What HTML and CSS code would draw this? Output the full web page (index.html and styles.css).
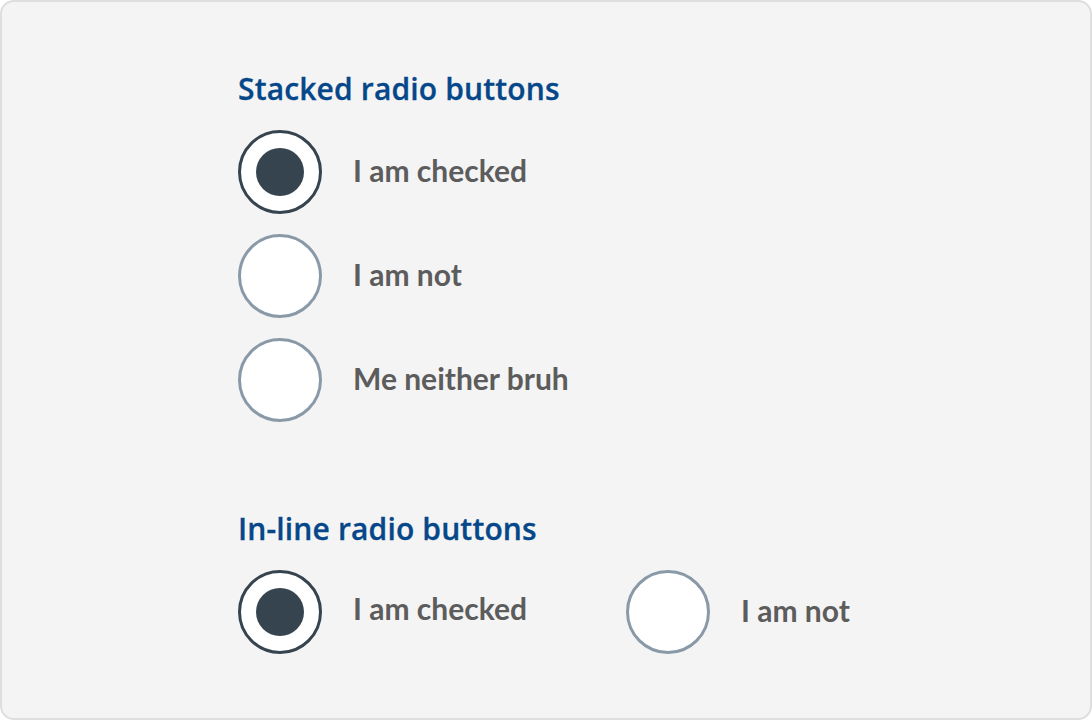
FILE: index.html
```html
<!DOCTYPE html>
<html lang="en">
<head>
<meta charset="utf-8">
<title>Radio buttons</title>
<link rel="stylesheet" href="styles.css">
</head>
<body>
<div class="card">
  <section class="group">
    <h2 class="group-title">Stacked radio buttons</h2>
    <div class="stack">
      <label class="option">
        <span class="radio radio--checked"><span class="radio-dot"></span></span>
        <span class="option-label">I am checked</span>
      </label>
      <label class="option">
        <span class="radio"></span>
        <span class="option-label">I am not</span>
      </label>
      <label class="option">
        <span class="radio"></span>
        <span class="option-label">Me neither bruh</span>
      </label>
    </div>
  </section>
  <section class="group group--inline">
    <h2 class="group-title">In-line radio buttons</h2>
    <div class="inline">
      <label class="option">
        <span class="radio radio--checked"><span class="radio-dot"></span></span>
        <span class="option-label option-label--raised">I am checked</span>
      </label>
      <label class="option">
        <span class="radio"></span>
        <span class="option-label">I am not</span>
      </label>
    </div>
  </section>
</div>
</body>
</html>
```
FILE: styles.css
```css
* { box-sizing: border-box; }
html, body { margin: 0; padding: 0; background: #ffffff; }
body { width: 1092px; height: 720px; font-family: "Open Sans", "Noto Sans", sans-serif; }

.card {
  width: 1092px;
  height: 720px;
  background: #f4f4f4;
  border: 2px solid #dedede;
  border-radius: 14px;
  padding: 72px 0 0 236px;
}

.group-title {
  margin: 0 0 26px 0;
  font-size: 30px;
  line-height: 30px;
  font-weight: 600;
  color: #06478a;
  letter-spacing: 0.15px;
  -webkit-text-stroke: 0.3px #06478a;
}

.group--inline { margin-top: 92px; }

.stack {
  display: flex;
  flex-direction: column;
  gap: 20px;
}

.inline {
  display: grid;
  grid-template-columns: 388px auto;
  justify-content: start;
}

.option {
  display: flex;
  align-items: center;
  gap: 31px;
}

.radio {
  width: 84px;
  height: 84px;
  flex: 0 0 84px;
  border-radius: 50%;
  background: #ffffff;
  border: 3px solid #8a99a7;
  display: flex;
  align-items: center;
  justify-content: center;
}

.radio--checked { border-color: #36444f; }

.radio-dot {
  width: 48px;
  height: 48px;
  border-radius: 50%;
  background: #36444f;
}

.option-label {
  font-family: "Lato", "Open Sans", sans-serif;
  font-size: 30px;
  line-height: 30px;
  font-weight: 700;
  color: #5c5c5c;
  margin-bottom: 5px;
}

.option-label--raised { margin-bottom: 8px; }
```
